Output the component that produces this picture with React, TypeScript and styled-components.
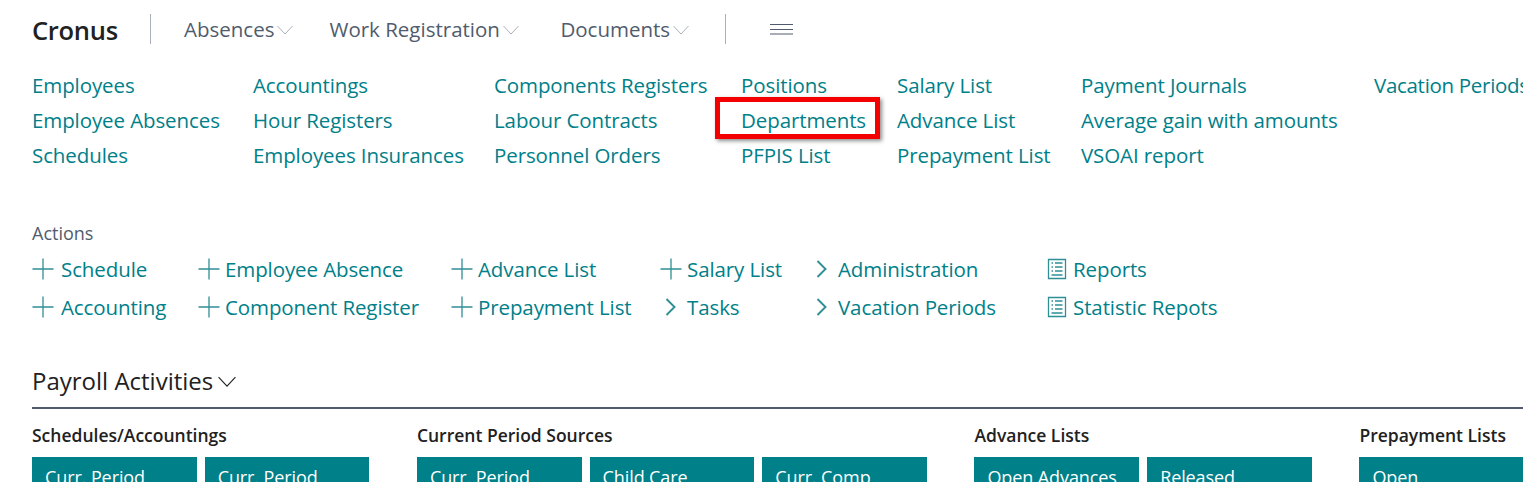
import React from "react";
import styled, { createGlobalStyle } from "styled-components";

const Global = createGlobalStyle`
  html, body { margin: 0; padding: 0; background: #fff; height: 482px; overflow: hidden; }
  body { font-family: "Open Sans", "Noto Sans", sans-serif; }
`;
const Page = styled.div`
  width: 1523px; height: 482px; overflow: hidden; box-sizing: border-box; padding: 14px 0 0 32px;
`;
const Header = styled.header`
  display: flex; align-items: center; height: 30px;
`;
const Brand = styled.div`
  font-size: 25.5px; font-weight: 600; color: #212121; letter-spacing: -0.3px; padding-top: 2px; width: 118px;
`;
const Divider = styled.div`
  width: 1px; height: 30px; background: #a9b0bb;
`;
const NavItem = styled.div`
  display: flex; align-items: center; font-size: 20.5px; color: #505c6d; margin-left: ${p => p.$ml}px;
`;
const Chev = styled.svg`
  width: ${p => p.$w || 16}px; height: ${p => (p.$w || 16) * 0.625}px; margin-left: ${p => p.$ml ?? 3}px; margin-top: 2px;
  fill: none; stroke: ${p => p.$c || "#a9b0bb"}; stroke-width: 1;
`;
const Hamburger = styled.svg`
  width: 23px; height: 14px; margin-left: 44px; stroke: #505c6d; stroke-width: 1; fill: none;
`;
const Links = styled.nav`
  display: flex; margin-top: 24px; white-space: nowrap;
`;
const LinkCol = styled.div`
  display: flex; flex-direction: column; flex: none; width: ${p => p.$w}px;
`;
const LinkText = styled.a`
  position: relative; display: block; height: 35px; line-height: 35px; font-size: 20.5px; color: #008089; letter-spacing: ${p => p.$ls ?? -0.1}px;
`;
const Highlight = styled.span`
  position: absolute; left: -26px; right: 17px; top: -6px; height: 42px; box-sizing: border-box;
  border: 5px solid #f50000; box-shadow: 2px 2px 4px rgba(0,0,0,.45);
`;
const ActionsLabel = styled.div`
  margin-top: 48px; font-size: 18px; line-height: 24px; color: #505c6d;
`;
const Actions = styled.div`
  display: flex; margin-top: 5px; white-space: nowrap;
`;
const ActionCol = styled.div`
  display: flex; flex-direction: column; width: ${p => p.$w}px; flex: none;
`;
const Action = styled.a`
  display: flex; align-items: center; height: 38px; font-size: 20.5px; color: #008089; letter-spacing: -0.1px;
`;
const ActIcon = styled.svg`
  width: 22px; height: 22px; margin-right: ${p => p.$gap ?? 5}px; flex: none; fill: none; stroke: #2f8f96; stroke-width: 1.3;
`;
const SectionTitle = styled.h2`
  display: flex; align-items: center; margin: 39px 0 0; font-size: 24px; line-height: 32px; font-weight: 500; color: #212121;
`;
const Rule = styled.div`
  height: 2px; background: #505c6d; margin-top: 10px;
`;
const Groups = styled.div`
  display: flex; gap: 47.6px; margin-top: 14px;
`;
const Group = styled.section`
  flex: none;
`;
const GroupLabel = styled.div`
  font-size: 17.5px; line-height: 24px; font-weight: 600; color: #212121; white-space: nowrap;
`;
const Tiles = styled.div`
  display: flex; gap: 8px; margin-top: 10px;
`;
const Tile = styled.div`
  width: 164.67px; height: 100px; box-sizing: border-box; padding: 8px 13px; background: #008089; color: #fff; font-size: 18px; line-height: 24px; letter-spacing: -0.1px;
`;

type IconProps = { gap?: number };
const Plus = ({ gap }: IconProps) => <ActIcon viewBox="0 0 22 22" $gap={gap}><path d="M11 .5v21M.5 11h21" /></ActIcon>;
const Arrow = ({ gap }: IconProps) => <ActIcon viewBox="0 0 22 22" $gap={gap}><path d="M6.5 3l8 8-8 8" strokeWidth="1.9" /></ActIcon>;
const Report = ({ gap }: IconProps) => (
  <ActIcon viewBox="0 0 22 22" $gap={gap}>
    <path d="M2.5 1.5h17v19h-17zM5.5 5h1.5M9 5h7.5M5.5 9h1.5M9 9h7.5M5.5 13h1.5M9 13h7.5M5.5 17h11" />
  </ActIcon>
);
const Down = ({ c, ml, w }: { c?: string; ml?: number; w?: number }) => (
  <Chev viewBox="0 0 16 10" $c={c} $ml={ml} $w={w}><path d="M.5 1l7.5 8 7.5-8" /></Chev>
);

const columns: [number, string[]][] = [
  [221, ["Employees", "Employee Absences", "Schedules"]],
  [241, ["Accountings", "Hour Registers", "Employees Insurances"]],
  [247, ["Components Registers", "Labour Contracts", "Personnel Orders"]],
  [156, ["Positions", "Departments", "PFPIS List"]],
  [184, ["Salary List", "Advance List", "Prepayment List"]],
  [293, ["Payment Journals", "Average gain with amounts", "VSOAI report"]],
  [200, ["Vacation Periods"]],
];
const actions: [number, [string, React.FC<IconProps>][]][] = [
  [166, [["Schedule", Plus], ["Accounting", Plus]]],
  [253, [["Employee Absence", Plus], ["Component Register", Plus]]],
  [209, [["Advance List", Plus], ["Prepayment List", Plus]]],
  [151, [["Salary List", Plus], ["Tasks", Arrow]]],
  [235, [["Administration", Arrow], ["Vacation Periods", Arrow]]],
  [200, [["Reports", Report], ["Statistic Repots", Report]]],
];
const groups = [
  ["Schedules/Accountings", ["Curr. Period", "Curr. Period"]],
  ["Current Period Sources", ["Curr. Period", "Child Care", "Curr. Comp"]],
  ["Advance Lists", ["Open Advances", "Released"]],
  ["Prepayment Lists", ["Open"]],
] as [string, string[]][];

export default function App() {
  return (
    <Page>
      <Global />
      <Header>
        <Brand>Cronus</Brand>
        <Divider />
        <NavItem $ml={33}>Absences<Down /></NavItem>
        <NavItem $ml={36}>Work Registration<Down /></NavItem>
        <NavItem $ml={41.5}>Documents<Down /></NavItem>
        <NavItem $ml={36}><Divider /></NavItem>
        <Hamburger viewBox="0 0 23 14">
          <path d="M0 2.5h23M0 7.5h23M0 12h23" />
        </Hamburger>
      </Header>
      <Links>
        {columns.map(([w, c], i) => (
          <LinkCol key={i} $w={w}>
            {c.map(t => (
              <LinkText key={t} $ls={t === "Vacation Periods" ? -0.3 : undefined}>
                {t}
                {t === "Departments" && <Highlight />}
              </LinkText>
            ))}
          </LinkCol>
        ))}
      </Links>
      <ActionsLabel>Actions</ActionsLabel>
      <Actions>
        {actions.map(([w, items], i) => (
          <ActionCol key={i} $w={w}>
            {items.map(([t, I]) => (
              <Action key={t}><I gap={i === 0 ? 7 : 5} />{t}</Action>
            ))}
          </ActionCol>
        ))}
      </Actions>
      <SectionTitle>Payroll Activities<Down c="#212121" ml={5} w={18} /></SectionTitle>
      <Rule />
      <Groups>
        {groups.map(([label, tiles]) => (
          <Group key={label}>
            <GroupLabel>{label}</GroupLabel>
            <Tiles>
              {tiles.map((t, i) => <Tile key={i}>{t}</Tile>)}
            </Tiles>
          </Group>
        ))}
      </Groups>
    </Page>
  );
}
